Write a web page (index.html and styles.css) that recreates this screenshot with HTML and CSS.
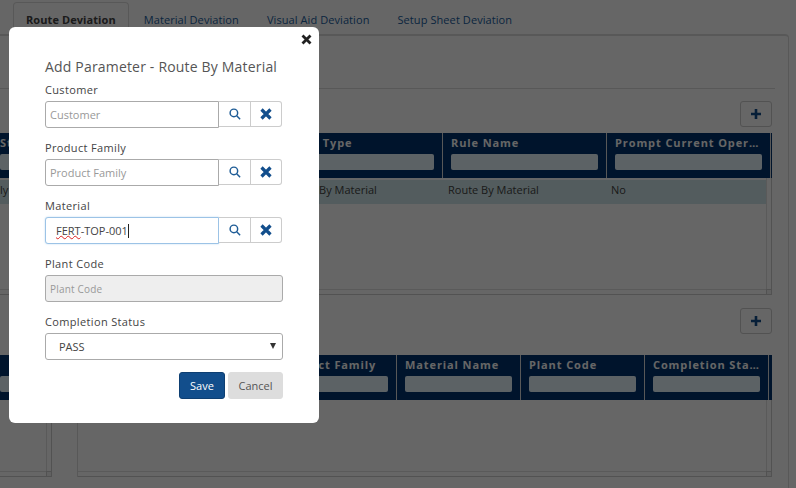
FILE: index.html
```html
<!DOCTYPE html>
<html lang="en">
<head>
    <meta charset="UTF-8">
    <title>Route Deviation</title>
    <link rel="stylesheet" href="styles.css">
</head>
<body>

    <!-- page behind the dialog -->
    <div class="tabs">
        <a class="tab active">Route Deviation</a>
        <a class="tab">Material Deviation</a>
        <a class="tab">Visual Aid Deviation</a>
        <a class="tab">Setup Sheet Deviation</a>
    </div>

    <div class="panel">
        <div class="panel-head"></div>

        <section class="section">
            <div class="toolbar">
                <button class="add-btn"><svg width="12" height="12" viewBox="0 0 12 12"><path d="M6 1v10M1 6h10"/></svg></button>
            </div>
            <div class="grid grid-rules">
                <div class="grid-head cols-rules">
                    <div class="head-cell cut"><span class="head-label">St</span><div class="filter"></div></div>
                    <div class="head-cell"><span class="head-label">Rule Type</span><div class="filter"></div></div>
                    <div class="head-cell"><span class="head-label">Rule Name</span><div class="filter"></div></div>
                    <div class="head-cell"><span class="head-label">Prompt Current Operation</span><div class="filter"></div></div>
                </div>
                <div class="grid-body">
                    <div class="rows">
                        <div class="row cols-rule-rows">
                            <div class="cell cut">ly</div>
                            <div class="cell">Route By Material</div>
                            <div class="cell">Route By Material</div>
                            <div class="cell">No</div>
                        </div>
                    </div>
                    <div class="vbar"></div>
                    <div class="hbar"></div>
                    <div class="corner"></div>
                </div>
            </div>
        </section>

        <section class="section">
            <div class="toolbar toolbar-wide">
                <button class="add-btn"><svg width="12" height="12" viewBox="0 0 12 12"><path d="M6 1v10M1 6h10"/></svg></button>
            </div>
            <div class="split">
                <div class="grid grid-left">
                    <div class="grid-head">
                        <div class="head-cell cut"><span class="head-label">&nbsp;</span><div class="filter"></div></div>
                    </div>
                    <div class="grid-body">
                        <div class="rows"></div>
                        <div class="vbar"></div>
                        <div class="hbar"></div>
                        <div class="corner"></div>
                    </div>
                </div>
                <div class="grid grid-params">
                    <div class="grid-head cols-params">
                        <div class="head-cell"><span class="head-label">Customer</span><div class="filter"></div></div>
                        <div class="head-cell"><span class="head-label">Product Family</span><div class="filter"></div></div>
                        <div class="head-cell"><span class="head-label">Material Name</span><div class="filter"></div></div>
                        <div class="head-cell"><span class="head-label">Plant Code</span><div class="filter"></div></div>
                        <div class="head-cell"><span class="head-label">Completion Status</span><div class="filter"></div></div>
                    </div>
                    <div class="grid-body">
                        <div class="rows"></div>
                        <div class="vbar"></div>
                        <div class="hbar"></div>
                        <div class="corner"></div>
                    </div>
                </div>
            </div>
        </section>
    </div>

    <div class="overlay"></div>

    <!-- dialog -->
    <div class="modal">
        <button class="modal-close"><svg width="11" height="11" viewBox="0 0 11 11"><path d="M1.5 1.5l8 8M9.5 1.5l-8 8"/></svg></button>
        <h2 class="modal-title">Add Parameter - Route By Material</h2>

        <div class="field">
            <label class="field-label">Customer</label>
            <div class="lookup">
                <input class="input" placeholder="Customer">
                <button class="lookup-btn"><svg class="icon-search" width="12" height="12" viewBox="0 0 14 14"><circle cx="5.7" cy="5.7" r="4.4"/><path d="M9 9l4 4"/></svg></button>
                <button class="lookup-btn"><svg class="icon-clear" width="12" height="12" viewBox="0 0 12 12"><path d="M1.5 1.5l9 9M10.5 1.5l-9 9"/></svg></button>
            </div>
        </div>

        <div class="field">
            <label class="field-label">Product Family</label>
            <div class="lookup">
                <input class="input" placeholder="Product Family">
                <button class="lookup-btn"><svg class="icon-search" width="12" height="12" viewBox="0 0 14 14"><circle cx="5.7" cy="5.7" r="4.4"/><path d="M9 9l4 4"/></svg></button>
                <button class="lookup-btn"><svg class="icon-clear" width="12" height="12" viewBox="0 0 12 12"><path d="M1.5 1.5l9 9M10.5 1.5l-9 9"/></svg></button>
            </div>
        </div>

        <div class="field">
            <label class="field-label">Material</label>
            <div class="lookup">
                <div class="input input-focus"><span class="misspelt">FERT</span>-TOP-001<span class="caret"></span></div>
                <button class="lookup-btn"><svg class="icon-search" width="12" height="12" viewBox="0 0 14 14"><circle cx="5.7" cy="5.7" r="4.4"/><path d="M9 9l4 4"/></svg></button>
                <button class="lookup-btn"><svg class="icon-clear" width="12" height="12" viewBox="0 0 12 12"><path d="M1.5 1.5l9 9M10.5 1.5l-9 9"/></svg></button>
            </div>
        </div>

        <div class="field">
            <label class="field-label">Plant Code</label>
            <input class="input input-wide" placeholder="Plant Code" disabled>
        </div>

        <div class="field">
            <label class="field-label">Completion Status</label>
            <div class="select">PASS</div>
        </div>

        <div class="modal-actions">
            <button class="btn btn-save">Save</button>
            <button class="btn btn-cancel">Cancel</button>
        </div>
    </div>

</body>
</html>
```

FILE: styles.css
```css
/* page behind the dialog */
* {
    box-sizing: border-box;
}

body {
    margin: 0;
    height: 488px;
    overflow: hidden;
    background-color: #fff;
    font-family: "Open Sans", sans-serif;
    color: #444;
}

.tabs {
    display: flex;
    gap: 2px;
    height: 33px;
    margin-top: 2px;
    padding-left: 13px;
}

.tab {
    height: 33px;
    padding: 0 12px;
    font-size: 11px;
    line-height: 33px;
    letter-spacing: 0.08px;
    color: #1a5e9e;
    border: 1px solid transparent;
}

.tab.active {
    font-weight: 700;
    color: #444;
    background-color: #fff;
    border-color: #ddd #ddd #fff;
    border-radius: 4px 4px 0 0;
}

.panel {
    height: 460px;
    margin-right: 7px;
    margin-top: -1px;
    padding-right: 16px;
    border-top: 2px solid #ddd;
    border-right: 1px solid #ddd;
    border-top-right-radius: 4px;
}

.panel-head {
    height: 53px;
    margin-right: -3px;
    border-bottom: 1px solid #ddd;
}

.toolbar {
    display: flex;
    justify-content: flex-end;
    margin-top: 12px;
    margin-bottom: 6px;
}

.toolbar-wide {
    margin-top: 13px;
    margin-bottom: 21px;
}

.add-btn {
    width: 32px;
    height: 26px;
    padding: 0;
    background-color: #fff;
    border: 1px solid #ccc;
    border-radius: 3px;
}

.add-btn svg {
    display: block;
    margin: 0 auto;
}

.add-btn path {
    stroke: #124e8c;
    stroke-width: 2.6;
    fill: none;
}

/* grids */
.grid {
    display: flex;
    flex-direction: column;
}

.grid-rules {
    height: 162px;
}

.split {
    display: flex;
    gap: 25px;
    height: 122px;
}

.grid-left {
    width: 52px;
}

.grid-params {
    flex: 1;
}

.cols-rules {
    display: grid;
    grid-template-columns: 283px 160px 164px 164px;
}

.cols-rule-rows {
    display: grid;
    grid-template-columns: 280px 162px 163px 160px;
}

.cols-params {
    display: grid;
    grid-template-columns: 196px 124px 124px 124px 124px;
}

.grid-head {
    height: 45px;
    background-color: #00326e;
}

.head-cell {
    height: 45px;
    min-width: 0;
    padding: 0 8px;
    border-right: 1px solid #ddd;
}

.head-cell.cut {
    padding-left: 0;
}

.grid-left .head-cell {
    border-right: none;
    padding-right: 0;
}

.head-label {
    display: block;
    height: 21px;
    font-size: 11px;
    font-weight: 700;
    line-height: 20px;
    letter-spacing: 0.9px;
    color: #fff;
    white-space: nowrap;
    overflow: hidden;
    text-overflow: ellipsis;
}

.filter {
    height: 16px;
    background-color: #e6f6fc;
    border-radius: 2px;
}

.grid-body {
    flex: 1;
    display: grid;
    grid-template-columns: 1fr 6px;
    grid-template-rows: 1fr 6px;
    padding-top: 2px;
    border-left: 1px solid #ddd;
}

.grid-rules .grid-body,
.grid-left .grid-body {
    border-left: none;
}

.rows {
    min-width: 0;
}

.row {
    height: 24px;
    background-color: #cfe6ea;
}

.cell {
    padding-left: 6px;
    font-size: 11px;
    line-height: 19px;
    color: #444;
}

.cell.cut {
    padding-left: 0;
}

.vbar {
    margin-top: -2px;
    border-left: 1px solid #e2e2e2;
    border-right: 1px solid #ccc;
}

.hbar {
    border-top: 1px solid #e2e2e2;
    border-bottom: 1px solid #ccc;
}

.corner {
    border: 1px solid #ccc;
    background-color: #f2f2f2;
}

/* dialog */
.overlay {
    position: fixed;
    top: 0;
    left: 0;
    right: 0;
    bottom: 0;
    background-color: rgba(0, 0, 0, 0.6);
}

.modal {
    position: fixed;
    top: 27px;
    left: 9px;
    width: 310px;
    height: 396px;
    padding: 29px 36px 0;
    background-color: #fff;
    border-radius: 6px;
}

.modal-close {
    position: absolute;
    top: 7px;
    right: 7px;
    width: 11px;
    height: 11px;
    padding: 0;
    background: none;
    border: none;
}

.modal-close svg {
    display: block;
}

.modal-close path {
    stroke: #222;
    stroke-width: 2.8;
    fill: none;
}

.modal-title {
    height: 23px;
    margin: 0 0 1px;
    font-size: 14px;
    font-weight: 400;
    line-height: 22px;
    letter-spacing: 0.18px;
    color: #555;
}

.field {
    margin-bottom: 10px;
}

.field-label {
    display: block;
    height: 21px;
    font-size: 11px;
    font-weight: 500;
    line-height: 20px;
    letter-spacing: 0.35px;
    color: #444;
}

.lookup {
    display: flex;
    width: 237px;
    height: 27px;
}

.input {
    display: block;
    width: 174px;
    height: 27px;
    padding: 0 4px;
    font-family: inherit;
    font-size: 11px;
    color: #444;
    background-color: #fff;
    border: 1px solid #aaa;
    border-radius: 3px 0 0 3px;
    outline: none;
}

.input::placeholder {
    color: #999;
    opacity: 1;
}

.input-focus {
    padding-left: 10px;
    line-height: 25px;
    border-color: #9cc3e6;
    box-shadow: 0 0 2px #bcd8f0;
}

.misspelt {
    text-decoration: underline wavy #d22;
    text-decoration-thickness: 0.7px;
    text-underline-offset: 0;
}

.caret {
    display: inline-block;
    width: 1px;
    height: 14px;
    vertical-align: -3px;
    background-color: #222;
}

.input-wide {
    width: 238px;
    border-radius: 3px;
    background-color: #eee;
    font-size: 10px;
    letter-spacing: 0.2px;
}

.lookup-btn {
    display: flex;
    align-items: center;
    justify-content: center;
    width: 32px;
    height: 26px;
    padding: 0;
    background-color: #fff;
    border: 1px solid #ccc;
    border-left: none;
}

.lookup-btn:last-child {
    width: 31px;
    border-radius: 0 3px 3px 0;
}

.icon-search circle,
.icon-search path {
    stroke: #1e5c96;
    stroke-width: 1.7;
    fill: none;
}

.icon-clear path {
    stroke: #124e8c;
    stroke-width: 3.2;
    fill: none;
}

.select {
    position: relative;
    width: 238px;
    height: 27px;
    padding-left: 13px;
    font-size: 11px;
    line-height: 26px;
    color: #444;
    border: 1px solid #aaa;
    border-radius: 3px;
}

.select::after {
    content: "";
    position: absolute;
    top: 9px;
    right: 6px;
    border-style: solid;
    border-width: 6px 3.5px 0;
    border-color: #333 transparent transparent;
}

.modal-actions {
    display: flex;
    justify-content: flex-end;
    gap: 3px;
    width: 238px;
    margin-top: 12px;
}

.btn {
    height: 27px;
    padding: 0;
    font-family: inherit;
    font-size: 11px;
    border-radius: 3px;
}

.btn-save {
    width: 46px;
    color: #fff;
    background-color: #124e8c;
    border: 1px solid #0e3f72;
}

.btn-cancel {
    width: 55px;
    color: #555;
    background-color: #ddd;
    border: 1px solid #ddd;
}
```
